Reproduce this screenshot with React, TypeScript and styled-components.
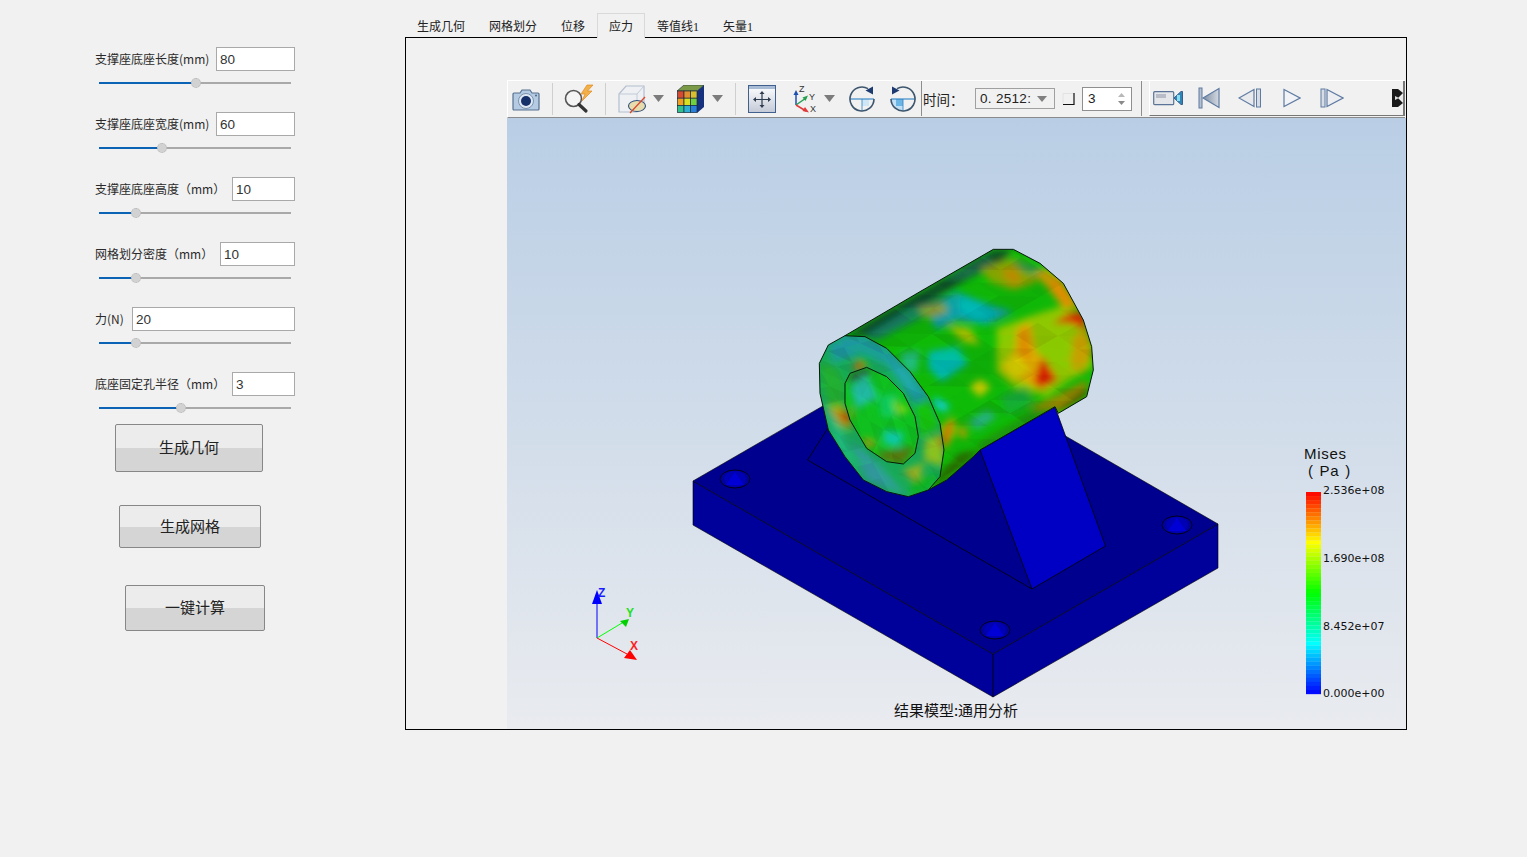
import * as React from 'react';
import styled, { createGlobalStyle } from 'styled-components';

const cjk = '"Noto Sans CJK SC", "Noto Sans", sans-serif';
const latin = '"Liberation Sans", "Noto Sans CJK SC", sans-serif';

const GlobalStyle = createGlobalStyle`
  html, body {
    margin: 0;
    padding: 0;
    background: #f1f1f1;
    overflow: hidden;
  }
`;

const Page = styled.div`
  display: flex;
  height: 857px;
  background: #f1f1f1;
  color: #222;
  font-family: ${cjk};
`;

const SidePanel = styled.div`
  display: flex;
  flex-direction: column;
  width: 200px;
  margin-left: 95px;
  padding-top: 47px;
`;

const ParamList = styled.div`
  display: flex;
  flex-direction: column;
  gap: 23px;
  margin-bottom: 10px;
`;

const ParamGroup = styled.div`
  display: flex;
  flex-direction: column;
  height: 42px;
`;

const ParamRow = styled.div`
  display: flex;
  align-items: center;
  justify-content: space-between;
  height: 24px;
`;

const ParamLabel = styled.span`
  padding-bottom: 2px;
  font-size: 12px;
  white-space: nowrap;
  color: #2a2a2a;
`;

const Field = styled.div<{ $w: number }>`
  box-sizing: border-box;
  width: ${p => p.$w}px;
  height: 24px;
  padding-left: 3px;
  line-height: 24px;
  background: #fff;
  border: 1px solid #a9a9a9;
  font-family: ${latin};
  font-size: 13.5px;
  color: #333;
`;

const Slider = styled.div`
  display: flex;
  align-items: center;
  height: 12px;
  margin: 6px 4px 0;
`;

const SliderFill = styled.div<{ $w: number }>`
  width: ${p => p.$w}px;
  height: 2px;
  background: #0b63b6;
`;

const SliderThumb = styled.div`
  flex: none;
  box-sizing: border-box;
  width: 10px;
  height: 10px;
  margin: 0 -5px;
  border-radius: 50%;
  background: #d2d2d2;
  border: 1px dotted #b4b4b4;
  z-index: 1;
`;

const SliderRest = styled.div`
  flex: 1;
  height: 2px;
  background: #a9a9a9;
`;

const ActionButton = styled.div<{ $ml: number; $w: number; $h: number; $mb: number }>`
  display: flex;
  align-items: center;
  justify-content: center;
  box-sizing: border-box;
  flex: none;
  width: ${p => p.$w}px;
  height: ${p => p.$h}px;
  margin-left: ${p => p.$ml}px;
  margin-bottom: ${p => p.$mb}px;
  padding-bottom: 3px;
  border: 1px solid #878787;
  border-radius: 2px;
  background: linear-gradient(#ececec 0 50%, #d5d5d5 50% 100%);
  font-size: 15px;
  color: #222;
`;

const Workspace = styled.div`
  display: flex;
  flex-direction: column;
  width: 1002px;
  margin-left: 110px;
  padding-top: 13px;
`;

const TabBar = styled.div`
  display: flex;
  height: 25px;
`;

const Tab = styled.div<{ $active?: boolean }>`
  position: relative;
  z-index: ${p => (p.$active ? 1 : 0)};
  box-sizing: border-box;
  height: ${p => (p.$active ? 25 : 24)}px;
  margin-top: ${p => (p.$active ? 0 : 1)}px;
  padding: 0 ${p => (p.$active ? 11 : 12)}px;
  line-height: ${p => (p.$active ? 24 : 23)}px;
  font-size: 12px;
  color: #222;
  white-space: nowrap;
  background: ${p => (p.$active ? '#f1f1f1' : 'transparent')};
  border: ${p => (p.$active ? '1px solid #d9d9d9' : 'none')};
  border-bottom: none;
`;

const TabDigit = styled.span`
  font-family: "Liberation Serif", serif;
  font-size: 12px;
`;

const Frame = styled.div`
  display: flex;
  flex-direction: column;
  box-sizing: border-box;
  width: 1002px;
  height: 693px;
  margin-top: -1px;
  padding: 42px 0 0 101px;
  border: 1px solid #000;
  background: #f1f1f1;
`;

const Toolbar = styled.div`
  display: flex;
  align-items: center;
  box-sizing: border-box;
  height: 38px;
  flex: none;
  margin-right: 1px;
  padding-bottom: 1px;
  border-top: 1px solid #fff;
  border-bottom: 1px solid #8a8a8a;
  border-left: 1px solid #fff;
  font-size: 14px;
`;

const ToolIcon = styled.svg<{ $ml: number }>`
  display: block;
  flex: none;
  margin-left: ${p => p.$ml}px;
`;

const ToolSep = styled.div<{ $ml: number; $dark?: boolean }>`
  flex: none;
  align-self: ${p => (p.$dark ? 'stretch' : 'center')};
  width: 1px;
  height: ${p => (p.$dark ? 'auto' : '32px')};
  margin-left: ${p => p.$ml}px;
  background: ${p => (p.$dark ? '#8d8d8d' : '#cfcfcf')};
`;

const TimeLabel = styled.span`
  flex: none;
  width: 37px;
  margin-left: 1px;
  font-size: 13.5px;
  white-space: nowrap;
  color: #222;
`;

const ComboBox = styled.div`
  display: flex;
  align-items: center;
  justify-content: space-between;
  box-sizing: border-box;
  flex: none;
  width: 80px;
  height: 21px;
  margin-left: 15px;
  padding: 0 7px 0 4px;
  background: #f1f1f1;
  border: 1px solid #a0a0a0;
  font-family: ${latin};
  font-size: 13.5px;
  letter-spacing: 0.3px;
  white-space: pre;
`;

const SpinBox = styled.div`
  display: flex;
  align-items: center;
  justify-content: space-between;
  box-sizing: border-box;
  flex: none;
  width: 50px;
  height: 24px;
  margin-left: 6px;
  padding: 0 5px;
  background: #fff;
  border: 1px solid #8f8f8f;
  font-family: ${latin};
  font-size: 13.5px;
`;

const PlayerGroup = styled.div`
  display: flex;
  align-items: center;
  box-sizing: border-box;
  flex: 1;
  align-self: stretch;
  margin-left: 7px;
  padding-left: 3px;
  border-left: 1px solid #fff;
  border-right: 2px solid #777;
  border-bottom: 1px solid #777;
`;

const OverflowMark = styled.svg`
  display: block;
  flex: none;
  margin-left: auto;
`;

const Viewport = styled.div`
  flex: 1;
  background: linear-gradient(#b9cee5, #e9ebef);
`;

const SceneSvg = styled.svg`
  display: block;
  width: 899px;
  height: 611px;
`;

/* ---------- stress contour: colour patches traced at 3x, then softened ---------- */

type Patch = [string, string];
type Pt = [number, number];

const hash = (i: number, j: number, k: number) => {
  const s = Math.sin(i * 127.1 + j * 311.7 + k * 74.7) * 43758.5453;
  return (s - Math.floor(s)) * 2 - 1;
};

const bodyOutline = '135,287 360,155 580,28 640,28 720,70 790,130 850,240 875,320 880,390 860,470 775,520 765,500 540,630 520,650 440,720 385,750 260,500';
const ringOutline = '85,315 135,287 195,290 260,325 330,395 385,470 420,550 432,630 420,710 385,750 325,770 260,755 190,720 135,650 85,570 60,460 58,370';
const holeOutline = '135,430 150,400 200,382 260,410 310,460 345,530 355,590 345,640 310,672 260,665 200,625 150,540 135,490';

const bodyPatches: Patch[] = [
  ['#0a4a28', '135,287 580,28 640,28 600,70 480,130 350,205 230,285'],
  ['#127a60', '190,290 330,205 420,175 460,160 420,205 300,265 230,300'],
  ['#1e6a50', '430,120 560,50 580,70 500,115'],
  ['#8aa000', '540,85 640,55 720,85 705,130 640,150 570,125'],
  ['#c08800', '600,95 650,85 665,135 625,130'],
  ['#10a0a8', '380,215 470,155 570,195 640,215 560,255 470,240 410,270'],
  ['#00b8b8', '480,170 540,190 600,225 530,245 480,215'],
  ['#0a9a50', '640,60 720,85 745,100 700,105 660,85'],
  ['#8c9a30', '350,205 430,190 445,215 385,235'],
  ['#a8c000', '440,255 510,265 540,315 490,305'],
  ['#90c800', '590,265 700,225 800,195 860,260 878,380 800,425 740,470 640,440 590,395'],
  ['#e0a800', '650,265 690,245 705,330 770,410 715,445 640,410 605,385 645,330'],
  ['#d8d000', '610,370 650,345 690,390 640,420'],
  ['#e08c00', '655,275 680,260 695,335 680,365 655,335'],
  ['#d82000', '700,425 728,350 772,420 722,447'],
  ['#e09000', '730,125 770,100 842,205 790,205'],
  ['#d83000', '758,250 800,222 850,212 862,272 810,250'],
  ['#c8a000', '820,290 860,265 880,330 850,400 810,390'],
  ['#d0a000', '700,100 745,85 770,130 735,135'],
  ['#9a8a00', '685,505 760,470 862,420 858,470 775,515'],
  ['#506a00', '780,505 860,440 858,470 790,520'],
  ['#00b8b0', '385,335 470,320 505,370 425,425 385,385'],
  ['#10d0d8', '405,470 452,498 428,518 398,490'],
  ['#20c080', '300,340 360,330 350,400 310,390'],
  ['#c8c800', '508,440 540,418 572,440 540,472'],
  ['#b0b000', '418,565 460,528 472,572 432,632'],
  ['#d89000', '476,575 490,553 502,585 488,597'],
  ['#d84000', '424,602 450,540 456,556 436,618'],
  ['#28b080', '505,542 560,510 592,530 530,572'],
  ['#18a838', '600,470 680,440 700,490 620,525'],
  ['#2a6a00', '385,750 440,720 540,630 480,640 430,690'],
  ['#208c10', '520,650 765,500 700,515 545,605'],
];

const ringPatches: Patch[] = [
  ['#1a98a0', '85,315 135,287 195,290 260,325 330,395 385,470 345,490 260,375 180,340 100,372'],
  ['#20a8b0', '250,340 330,400 360,470 320,450'],
  ['#20b030', '58,370 100,372 135,430 135,500 80,500'],
  ['#10b028', '180,345 225,365 160,400'],
  ['#b0a810', '75,500 130,498 158,572 110,552'],
  ['#c84000', '112,510 150,518 152,552 130,542'],
  ['#d04000', '158,388 175,362 198,388'],
  ['#18c010', '345,500 385,480 420,560 360,590'],
  ['#90c020', '375,600 430,580 432,680 372,662'],
  ['#d04000', '418,600 430,575 430,640'],
  ['#20b880', '60,460 120,560 190,720 110,620'],
  ['#309ca0', '150,600 245,680 320,768 200,722'],
  ['#a0b020', '308,692 372,668 352,735'],
  ['#10b020', '340,720 420,700 385,750 325,770'],
];

const holePatches: Patch[] = [
  ['#2a5a40', '135,430 150,400 200,382 220,400 165,420'],
  ['#20c0a8', '150,440 200,405 235,472 170,505'],
  ['#10d060', '235,470 290,460 300,530 245,530'],
  ['#10c8a8', '250,570 312,578 300,622 250,610'],
  ['#84d810', '278,480 332,510 292,525'],
  ['#c8a010', '190,590 232,610 200,625'],
  ['#c87a10', '140,500 158,512 160,545'],
  ['#5a7a10', '222,640 345,620 310,672 260,665'],
];

const facets = (u: Pt, v: Pt) => {
  const out: { points: string; fill: string; opacity: number }[] = [];
  for (let i = -14; i <= 14; i++) {
    for (let j = -14; j <= 14; j++) {
      const p = (a: number, b: number) => `${(450 + a * u[0] + b * v[0]).toFixed(0)},${(400 + a * u[1] + b * v[1]).toFixed(0)}`;
      const h1 = hash(i, j, 3);
      const h2 = hash(i, j, 5);
      out.push({ points: `${p(i, j)} ${p(i + 1, j)} ${p(i + 1, j + 1)}`, fill: h1 > 0 ? '#0f0' : '#000', opacity: Math.abs(h1) * 0.07 });
      out.push({ points: `${p(i, j)} ${p(i + 1, j + 1)} ${p(i, j + 1)}`, fill: h2 > 0 ? '#0f0' : '#000', opacity: Math.abs(h2) * 0.07 });
    }
  }
  return out;
};

const bodyFacets = facets([66, -38], [60, 40]);
const ringFacets = facets([48, -12], [26, 46]);
const holeFacets = facets([44, 26], [-22, 44]);

const jetBand = (t: number) => {
  const v = Math.min(1, Math.max(0, t)) * 4;
  if (v < 1) return `rgb(0,${Math.round(255 * v)},255)`;
  if (v < 2) return `rgb(0,255,${Math.round(255 * (2 - v))})`;
  if (v < 3) return `rgb(${Math.round(255 * (v - 2))},255,0)`;
  return `rgb(255,${Math.round(255 * (4 - v))},0)`;
};

const legendBands = Array.from({ length: 50 }, (_, i) => ({ y: 492 + i * 4.04, fill: jetBand(1 - (i + 0.5) / 50) }));

type ContourProps = { id: string; outline: string; base: string; patches: Patch[]; cells: ReturnType<typeof facets> };

const Contour: React.FC<ContourProps> = ({ id, outline, base, patches, cells }) => (
  <>
    <clipPath id={id}>
      <polygon points={outline} />
    </clipPath>
    <g clipPath={`url(#${id})`}>
      <rect x={0} y={0} width={900} height={800} fill={base} />
      <g filter="url(#contour-soft)">
        {patches.map(([fill, points]) => (
          <polygon key={points} points={points} fill={fill} />
        ))}
      </g>
      {cells.map(c => (
        <polygon key={c.points} points={c.points} fill={c.fill} opacity={c.opacity} />
      ))}
    </g>
    <polygon points={outline} fill="none" stroke="#06180a" strokeWidth={3} />
  </>
);

const BoltHole: React.FC<{ cx: number; cy: number }> = ({ cx, cy }) => (
  <g>
    <ellipse cx={cx} cy={cy} rx={15} ry={9} fill="#00009a" stroke="#000" strokeWidth={0.8} />
    <ellipse cx={cx} cy={cy} rx={11} ry={8} fill="#0000b4" />
    <polygon points={`${cx},${cy - 7} ${cx + 9},${cy + 6} ${cx - 9},${cy + 6}`} fill="#0000d6" />
  </g>
);

const TriadLetter = styled.text`
  font-family: "Liberation Sans", sans-serif;
  font-size: 12px;
  font-weight: 700;
`;

const LegendTitle = styled.text`
  font-family: "Liberation Sans", sans-serif;
  font-size: 15px;
  letter-spacing: 0.7px;
  word-spacing: 1px;
  fill: #111;
`;

const LegendValue = styled.text`
  font-family: "DejaVu Sans", sans-serif;
  font-size: 11px;
  fill: #111;
`;

const Caption = styled.text`
  font-family: ${cjk};
  font-size: 15px;
  text-anchor: middle;
  fill: #111;
`;

const Scene: React.FC = () => (
  <SceneSvg viewBox="507 118 899 611">
    <defs>
      <filter id="contour-soft" x="-10%" y="-10%" width="120%" height="120%">
        <feGaussianBlur stdDeviation="11" />
      </filter>
    </defs>
    {/* base plate */}
    <polygon points="693,481 993,654 993,697 693,525" fill="#00009a" stroke="#000" strokeWidth={0.6} />
    <polygon points="993,654 1218,524 1218,568 993,697" fill="#00009a" stroke="#000" strokeWidth={0.6} />
    <polygon points="693,481 918,351 1218,524 993,654" fill="#00008f" stroke="#000" strokeWidth={0.6} />
    <BoltHole cx={735} cy={479} />
    <BoltHole cx={1177} cy={525} />
    <BoltHole cx={995} cy={630} />
    <polyline points="828,428 807.5,460 1032,589" fill="none" stroke="#000" strokeWidth={0.8} />
    <polygon points="980,450 1055,407 1105.5,546 1032,589" fill="#0000c4" stroke="#000" strokeWidth={0.8} />

    {/* stress-coloured bearing seat, drawn in 3x coordinates */}
    <g transform="translate(800 240) scale(0.33333)">
      <Contour id="clip-body" outline={bodyOutline} base="#10b808" patches={bodyPatches} cells={bodyFacets} />
      <Contour id="clip-ring" outline={ringOutline} base="#18a858" patches={ringPatches} cells={ringFacets} />
      <Contour id="clip-hole" outline={holeOutline} base="#10c020" patches={holePatches} cells={holeFacets} />
    </g>

    {/* axis triad */}
    <line x1={597} y1={638} x2={597} y2={600} stroke="#0000ff" strokeWidth={1} />
    <polygon points="597,590 602,604 592,604" fill="#0000ff" />
    <line x1={597} y1={638} x2={622} y2={623} stroke="#00ff00" strokeWidth={1} />
    <polygon points="629,619 626,627 620,621" fill="#00d000" />
    <line x1={597} y1={638} x2={627} y2={654} stroke="#ff0000" strokeWidth={1} />
    <polygon points="637,660 624,658 630,650" fill="#ff0000" />
    <TriadLetter x={598} y={597} fill="#1a1aff">Z</TriadLetter>
    <TriadLetter x={626} y={617} fill="#22e022">Y</TriadLetter>
    <TriadLetter x={630} y={650} fill="#ff2020">X</TriadLetter>

    {/* legend */}
    {legendBands.map(b => (
      <rect key={b.y} x={1306} y={b.y} width={15} height={4.2} fill={b.fill} />
    ))}
    <LegendTitle x={1304} y={459}>Mises</LegendTitle>
    <LegendTitle x={1308} y={476}>( Pa )</LegendTitle>
    <LegendValue x={1323} y={494}>2.536e+08</LegendValue>
    <LegendValue x={1323} y={562}>1.690e+08</LegendValue>
    <LegendValue x={1323} y={630}>8.452e+07</LegendValue>
    <LegendValue x={1323} y={697}>0.000e+00</LegendValue>
    <Caption x={956} y={716}>结果模型:通用分析</Caption>
  </SceneSvg>
);

/* ---------- toolbar icons ---------- */

const Caret: React.FC<{ ml: number }> = ({ ml }) => (
  <ToolIcon $ml={ml} width={11} height={7} viewBox="0 0 11 7">
    <polygon points="0,0 11,0 5.5,7" fill="#7c7c7c" />
  </ToolIcon>
);

const CameraIcon = () => (
  <ToolIcon $ml={4} width={28} height={24} viewBox="0 0 28 24">
    <path d="M2 6h6l2-3h8l2 3h6a1 1 0 0 1 1 1v15a1 1 0 0 1-1 1H2a1 1 0 0 1-1-1V7a1 1 0 0 1 1-1z" fill="#b5cbe3" stroke="#56708f" strokeWidth={1.2} />
    <circle cx={14} cy={14} r={7.5} fill="#dfe8f2" stroke="#7b93ad" />
    <circle cx={14} cy={14} r={5} fill="#16316a" />
    <circle cx={24} cy={8.5} r={1} fill="#4a6788" />
  </ToolIcon>
);

const ZoomBoltIcon = () => (
  <ToolIcon $ml={11} width={30} height={30} viewBox="0 0 30 30">
    <circle cx={9.5} cy={14.5} r={8} fill="#f4f4f4" stroke="#555" strokeWidth={1.6} />
    <path d="M15 20.5L22 27" stroke="#333" strokeWidth={3.2} strokeLinecap="round" />
    <polygon points="23,1 17,10 21,10 18,17 28,7 23.5,7 29,1" fill="#f2b04a" stroke="#e08a20" strokeWidth={0.7} />
  </ToolIcon>
);

const HiddenCubeIcon = () => (
  <ToolIcon $ml={11} width={30} height={30} viewBox="0 0 30 30">
    <polygon points="2,10 9,2 27,2 27,20 20,28 2,28" fill="#eef0f4" stroke="#b4bfce" strokeWidth={1.2} />
    <polyline points="2,10 20,10 27,2" fill="none" stroke="#c2cbd8" />
    <polyline points="20,10 20,28" fill="none" stroke="#c2cbd8" />
    <ellipse cx={20} cy={22} rx={8.5} ry={5.5} fill="#e6dcae" stroke="#33507c" strokeWidth={1.1} />
    <line x1={13} y1={29} x2={28} y2={13} stroke="#d8482a" strokeWidth={1.3} />
  </ToolIcon>
);

const cubeCells = ['#d84a30', '#e09030', '#d8c030', '#f0a020', '#d8e020', '#70d040', '#30c090', '#30b0d0', '#2880d8'];

const ColorCubeIcon = () => (
  <ToolIcon $ml={13} width={27} height={28} viewBox="0 0 27 28">
    <polygon points="20,6 27,0 27,22 20,28" fill="#16327e" />
    <polygon points="0,6 7,0 27,0 20,6" fill="#7a9a48" stroke="#1a2a3a" strokeWidth={0.6} />
    {cubeCells.map(c => {
      const i = cubeCells.indexOf(c);
      return <rect key={c} x={0.5 + (i % 3) * 6.5} y={6 + Math.floor(i / 3) * 7.2} width={6.5} height={7.2} fill={c} stroke="#1a2a3a" strokeWidth={0.7} />;
    })}
  </ToolIcon>
);

const FitIcon = () => (
  <ToolIcon $ml={12} width={28} height={28} viewBox="0 0 28 28">
    <defs>
      <linearGradient id="fit-fill" x1="0" y1="0" x2="0" y2="1">
        <stop offset="0" stopColor="#ffffff" />
        <stop offset="1" stopColor="#c3c9d6" />
      </linearGradient>
    </defs>
    <rect x={0.5} y={0.5} width={27} height={27} fill="url(#fit-fill)" stroke="#41608e" />
    <rect x={1} y={1} width={26} height={3} fill="#a9bcd6" />
    <path d="M14 8v13M7 14.5h14" stroke="#2f3b4e" strokeWidth={1.2} />
    <path d="M14 6l-2.5 3h5zM14 23l-2.5-3h5zM5 14.5l3-2.5v5zM23 14.5l-3-2.5v5z" fill="#2f3b4e" />
  </ToolIcon>
);

const IconLetter = styled.text`
  font-family: "Liberation Sans", sans-serif;
  font-size: 9px;
  fill: #333;
`;

const AxesIcon = () => (
  <ToolIcon $ml={17} width={24} height={28} viewBox="0 0 24 28">
    <path d="M3 20V8" stroke="#1f4fb0" strokeWidth={1.5} />
    <polygon points="3,5 0.5,10 5.5,10" fill="#1f4fb0" />
    <path d="M3 20l10-7" stroke="#25a050" strokeWidth={1.5} />
    <polygon points="15,10.5 9.5,12.5 12.5,16" fill="#25a050" />
    <path d="M3 20l10 6" stroke="#e03a3a" strokeWidth={1.5} />
    <polygon points="16,27.5 9.5,26 12,22" fill="#e03a3a" />
    <IconLetter x={6} y={7}>Z</IconLetter>
    <IconLetter x={16} y={15}>Y</IconLetter>
    <IconLetter x={17} y={27}>X</IconLetter>
  </ToolIcon>
);

const RotateIcon: React.FC<{ ml: number; flip?: boolean }> = ({ ml, flip }) => (
  <ToolIcon $ml={ml} width={28} height={28} viewBox="0 0 28 28">
    <g transform={flip ? 'translate(28 0) scale(-1 1)' : undefined}>
      {flip && <path d="M14 14h12a12 12 0 0 1-12 12z" fill="#bfe0f6" />}
      <path d="M14 14h7v7h-7z" fill={flip ? '#6cb6e6' : '#cfe6f6'} />
      <path d="M2 14h24" stroke="#2c82c4" strokeWidth={1.1} />
      <path d="M14 14v12" stroke="#2c82c4" strokeWidth={0.8} />
      <path d="M20 3.6A12 12 0 1 0 26 14" fill="none" stroke="#3d566e" strokeWidth={1.6} />
      <polygon points="25,1.5 25,9.5 17.5,5.5" fill="#1d3b70" />
    </g>
  </ToolIcon>
);

const StepCorner = () => (
  <ToolIcon $ml={7} width={14} height={14} viewBox="0 0 14 14">
    <path d="M1 1.5h11M1 1.5v10" stroke="#e2e2e2" />
    <path d="M12 1v12M1 12.5h11" stroke="#111" strokeWidth={1.2} />
  </ToolIcon>
);

const SpinArrows = () => (
  <svg width={9} height={14} viewBox="0 0 9 14">
    <polygon points="4.5,1 8,5 1,5" fill="#b8b8b8" />
    <polygon points="4.5,13 8,9 1,9" fill="#8a8a8a" />
  </svg>
);

const ComboCaret = () => (
  <svg width={10} height={6} viewBox="0 0 10 6">
    <polygon points="0,0 10,0 5,6" fill="#808080" />
  </svg>
);

const VideoIcon = () => (
  <ToolIcon $ml={0} width={30} height={16} viewBox="0 0 30 16">
    <rect x={0.7} y={1.7} width={20} height={13} rx={1} fill="#e4e6ea" stroke="#5a7396" strokeWidth={1.2} />
    <rect x={3} y={4} width={10} height={4} fill="#b8bcc6" />
    <polygon points="21,8 28,1.5 29.5,1.5 29.5,14.5 28,14.5" fill="#2e86b8" stroke="#3a5e8c" />
    <rect x={24} y={5} width={3} height={6} fill="#8adcf0" />
  </ToolIcon>
);

const playerStroke = '#5f7ba2';

const FirstIcon = () => (
  <ToolIcon $ml={15} width={22} height={22} viewBox="0 0 22 22">
    <defs>
      <linearGradient id="first-fill" x1="0" y1="0" x2="1" y2="0">
        <stop offset="0" stopColor="#7e8ea3" />
        <stop offset="1" stopColor="#d5dae2" />
      </linearGradient>
    </defs>
    <rect x={1} y={1} width={3} height={20} fill="#b7c0ce" stroke={playerStroke} />
    <polygon points="5,11 21,1.5 21,20.5" fill="url(#first-fill)" stroke={playerStroke} strokeWidth={1.2} />
  </ToolIcon>
);

const PrevIcon = () => (
  <ToolIcon $ml={18} width={24} height={20} viewBox="0 0 24 20">
    <polygon points="1,10 16,1.5 16,18.5" fill="#e8eaee" stroke={playerStroke} strokeWidth={1.2} />
    <rect x={18.5} y={1} width={4} height={18} fill="#d8dde5" stroke={playerStroke} />
  </ToolIcon>
);

const PlayIcon = () => (
  <ToolIcon $ml={21} width={18} height={20} viewBox="0 0 18 20">
    <polygon points="1,1.5 17,10 1,18.5" fill="#f2f3f6" stroke={playerStroke} strokeWidth={1.2} />
  </ToolIcon>
);

const NextIcon = () => (
  <ToolIcon $ml={19} width={24} height={20} viewBox="0 0 24 20">
    <rect x={1} y={1} width={4} height={18} fill="#d8dde5" stroke={playerStroke} />
    <polygon points="7,1.5 23,10 7,18.5" fill="#eceef2" stroke={playerStroke} strokeWidth={1.2} />
  </ToolIcon>
);

const OverflowIcon = () => (
  <OverflowMark width={11} height={18} viewBox="0 0 11 18">
    <polygon points="0,0 6,0 11,4 6,9 11,14 6,18 0,18" fill="#1a1a1a" />
    <polygon points="3,7 7,9 3,11" fill="#dcdcdc" />
    <polygon points="11,6 8,9 11,12" fill="#e8e8e8" />
  </OverflowMark>
);

/* ---------- data ---------- */

const params = [
  { label: '支撑座底座长度(mm)', value: '80', field: 79, thumb: 97 },
  { label: '支撑座底座宽度(mm)', value: '60', field: 79, thumb: 63 },
  { label: '支撑座底座高度（mm）', value: '10', field: 63, thumb: 37 },
  { label: '网格划分密度（mm）', value: '10', field: 75, thumb: 37 },
  { label: '力(N)', value: '20', field: 163, thumb: 37 },
  { label: '底座固定孔半径（mm）', value: '3', field: 63, thumb: 82 },
];

const tabs = [
  { text: '生成几何' },
  { text: '网格划分' },
  { text: '位移' },
  { text: '应力', active: true },
  { text: '等值线', digit: '1' },
  { text: '矢量', digit: '1' },
];

const actions = [
  { text: '生成几何', ml: 20, w: 148, h: 48, mb: 33 },
  { text: '生成网格', ml: 24, w: 142, h: 43, mb: 37 },
  { text: '一键计算', ml: 30, w: 140, h: 46, mb: 0 },
];

const App: React.FC = () => {
  return (
    <Page>
      <GlobalStyle />
      <SidePanel>
        <ParamList>
          {params.map(p => (
            <ParamGroup key={p.label}>
              <ParamRow>
                <ParamLabel>{p.label}</ParamLabel>
                <Field $w={p.field}>{p.value}</Field>
              </ParamRow>
              <Slider>
                <SliderFill $w={p.thumb} />
                <SliderThumb />
                <SliderRest />
              </Slider>
            </ParamGroup>
          ))}
        </ParamList>
        {actions.map(a => (
          <ActionButton key={a.text} $ml={a.ml} $w={a.w} $h={a.h} $mb={a.mb}>
            {a.text}
          </ActionButton>
        ))}
      </SidePanel>
      <Workspace>
        <TabBar>
          {tabs.map(t => (
            <Tab key={t.text} $active={t.active}>
              {t.text}
              {t.digit && <TabDigit>{t.digit}</TabDigit>}
            </Tab>
          ))}
        </TabBar>
        <Frame>
          <Toolbar>
            <CameraIcon />
            <ToolSep $ml={12} />
            <ZoomBoltIcon />
            <ToolSep $ml={11} />
            <HiddenCubeIcon />
            <Caret ml={6} />
            <ColorCubeIcon />
            <Caret ml={8} />
            <ToolSep $ml={12} />
            <FitIcon />
            <AxesIcon />
            <Caret ml={7} />
            <RotateIcon ml={13} />
            <RotateIcon ml={13} flip />
            <ToolSep $ml={4} $dark />
            <TimeLabel>时间：</TimeLabel>
            <ComboBox>
              0. 2512:
              <ComboCaret />
            </ComboBox>
            <StepCorner />
            <SpinBox>
              3
              <SpinArrows />
            </SpinBox>
            <ToolSep $ml={9} $dark />
            <PlayerGroup>
              <VideoIcon />
              <FirstIcon />
              <PrevIcon />
              <PlayIcon />
              <NextIcon />
              <OverflowIcon />
            </PlayerGroup>
          </Toolbar>
          <Viewport>
            <Scene />
          </Viewport>
        </Frame>
      </Workspace>
    </Page>
  );
};

export default App;
